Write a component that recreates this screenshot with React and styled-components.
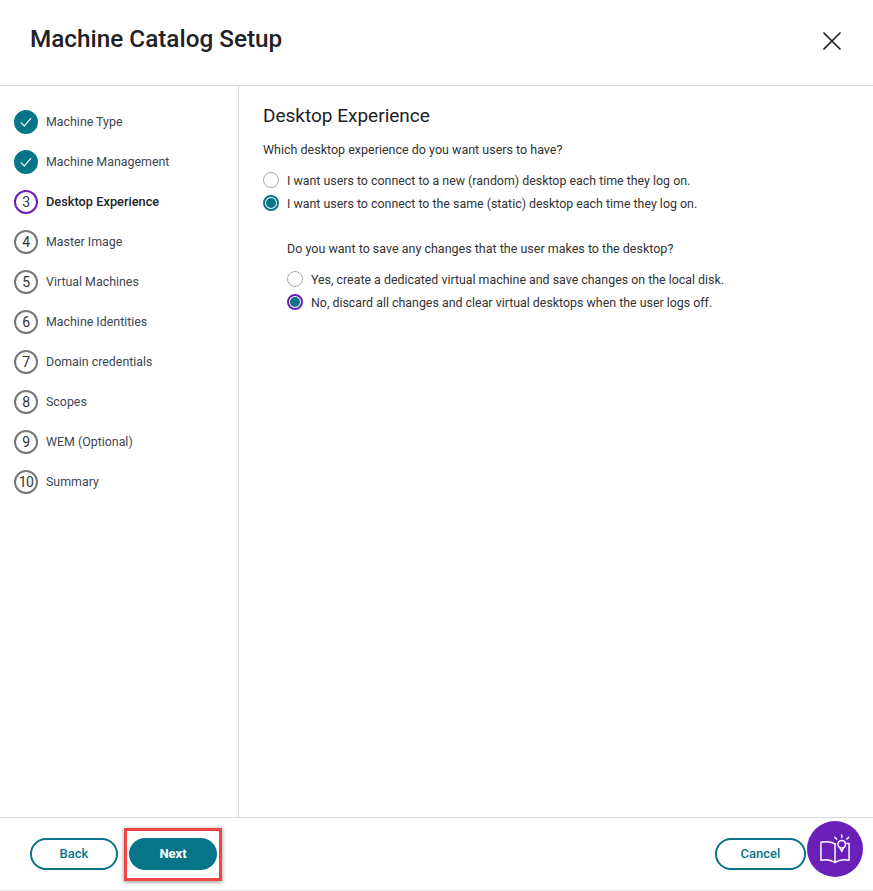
import React from 'react';
import styled, { createGlobalStyle } from 'styled-components';

const GlobalStyle = createGlobalStyle`
  html, body {
    margin: 0;
    padding: 0;
    background: #fff;
  }
  body {
    font-family: 'Roboto', 'Liberation Sans', sans-serif;
    color: #333;
  }
`;

const Dialog = styled.div`
  width: 873px;
  height: 891px;
  display: flex;
  flex-direction: column;
  background: #fff;
  overflow: hidden;
  box-sizing: border-box;
  border-bottom: 1px solid #e6e6e6;
`;

const Header = styled.header`
  height: 85px;
  flex: none;
  box-sizing: border-box;
  display: flex;
  align-items: flex-start;
  justify-content: space-between;
  padding: 24px 30px 0 30px;
`;

const Title = styled.h1`
  margin: 0;
  font-size: 24.3px;
  line-height: 30px;
  font-weight: 500;
  color: #1f2126;
`;

const CloseButton = styled.button`
  border: 0;
  padding: 0;
  margin-top: 6px;
  background: none;
  display: flex;
  width: 20px;
  height: 20px;
`;

const Body = styled.div`
  flex: 1;
  display: flex;
  min-height: 0;
  border-top: 1px solid #d9d9d9;
  border-bottom: 1px solid #d9d9d9;
`;

const Sidebar = styled.nav`
  width: 239px;
  flex: none;
  box-sizing: border-box;
  border-right: 1px solid #d9d9d9;
  padding: 24px 0 0 14px;
  display: flex;
  flex-direction: column;
  gap: 16px;
`;

const Step = styled.div`
  display: flex;
  align-items: center;
  gap: 8px;
  height: 24px;
`;

const StepMark = styled.span`
  width: 24px;
  height: 24px;
  box-sizing: border-box;
  border-radius: 50%;
  display: flex;
  align-items: center;
  justify-content: center;
  font-size: 14px;
  letter-spacing: -0.5px;
  padding-bottom: 1px;
  color: #333;
  background: ${p => (p.$state === 'done' ? '#067587' : '#fff')};
  border: 2px solid
    ${p => (p.$state === 'done' ? '#067587' : p.$state === 'active' ? '#6a1fb8' : '#767676')};
`;

const StepLabel = styled.span`
  font-size: ${p => (p.$active ? '12.8px' : '12.4px')};
  line-height: 18px;
  color: ${p => (p.$active ? '#1f2126' : '#3d4653')};
  font-weight: ${p => (p.$active ? 500 : 400)};
`;

const Content = styled.main`
  flex: 1;
  padding: 17px 0 0 24px;
`;

const Heading = styled.h2`
  margin: 0 0 12px;
  font-size: 19px;
  line-height: 26px;
  font-weight: 400;
  color: #222;
`;

const Question = styled.p`
  margin: 0 0 ${p => p.$gap}px;
  font-size: 12.5px;
  line-height: 18px;
  color: #333;
`;

const RadioGroup = styled.div`
  display: flex;
  flex-direction: column;
  gap: 5px;
`;

const RadioRow = styled.label`
  display: flex;
  align-items: center;
  gap: 8px;
  height: 18px;
  font-size: 12.4px;
  color: #333;
`;

const RadioDot = styled.span`
  width: 16px;
  height: 16px;
  box-sizing: border-box;
  border-radius: 50%;
  background: #fff;
  display: flex;
  align-items: center;
  justify-content: center;
  flex: none;
  border: ${p => (p.$ring ? `2px solid ${p.$ring}` : '1px solid #a8a8a8')};

  &::after {
    content: '';
    display: ${p => (p.$ring ? 'block' : 'none')};
    width: 10px;
    height: 10px;
    border-radius: 50%;
    background: #067587;
  }
`;

const SubSection = styled.div`
  margin: 28px 0 0 24px;
`;

const Footer = styled.footer`
  height: 72px;
  flex: none;
  box-sizing: border-box;
  display: flex;
  align-items: flex-start;
  justify-content: space-between;
  padding: 20px 67px 0 30px;
`;

const ButtonRow = styled.div`
  display: flex;
  gap: 11px;
`;

const PillButton = styled.button`
  width: ${p => p.$width}px;
  height: 32px;
  box-sizing: border-box;
  border-radius: 16px;
  border: 2px solid #067587;
  font-family: 'Roboto', sans-serif;
  font-size: 13px;
  padding: 0 0 2px;
  font-weight: ${p => (p.$primary ? 700 : 500)};
  color: ${p => (p.$primary ? '#fff' : '#067587')};
  background: ${p => (p.$primary ? '#067587' : '#fff')};
`;

const Highlight = styled.span`
  position: absolute;
  left: -5px;
  top: -10px;
  right: -5px;
  bottom: -11px;
  box-sizing: border-box;
  border: 3px solid #f04545;
  box-shadow: 0 1px 4px rgba(0, 0, 0, 0.45);
  pointer-events: none;
`;

const NextWrap = styled.div`
  position: relative;
  display: flex;
`;

const HelpBadge = styled.button`
  position: absolute;
  left: 807px;
  top: 821px;
  width: 56px;
  height: 56px;
  border: 0;
  padding: 0;
  border-radius: 50%;
  background: #6a1fb8;
  display: flex;
  align-items: center;
  justify-content: center;
`;

const Page = styled.div`
  position: relative;
  width: 873px;
  height: 891px;
`;

const steps = [
  { label: 'Machine Type', state: 'done' },
  { label: 'Machine Management', state: 'done' },
  { label: 'Desktop Experience', state: 'active' },
  { label: 'Master Image' },
  { label: 'Virtual Machines' },
  { label: 'Machine Identities' },
  { label: 'Domain credentials' },
  { label: 'Scopes' },
  { label: 'WEM (Optional)' },
  { label: 'Summary' },
];

const CheckIcon = () => (
  <svg width="12" height="12" viewBox="0 0 14 14" fill="none">
    <path d="M1 7.5 L5 11.5 L13 2.5" stroke="#fff" strokeWidth="1.3" />
  </svg>
);

const CloseIcon = () => (
  <svg width="20" height="20" viewBox="0 0 20 20" fill="none">
    <path d="M0.5 2.5 L17.5 19.5 M17.5 2.5 L0.5 19.5" stroke="#1f2126" strokeWidth="1.6" />
  </svg>
);

const BookIcon = () => (
  <svg width="36" height="36" viewBox="0 0 32 32" fill="none" stroke="#fff" strokeWidth="1.3" strokeLinejoin="round" strokeLinecap="round">
    <path d="M16 11.5 C12.5 9.5 8 9 3.5 10 V26 C8 25 12.5 25.5 16 28 C19.5 25.5 24 25 28.5 26 V11 H26.5" />
    <path d="M16 11.5 V28" />
    <circle cx="22" cy="11.8" r="3.4" />
    <path d="M20.3 14.6 L22 18.2 L23.7 14.6" />
    <path d="M22 3.5 V5.7 M15.8 5.5 L17.4 7.2 M28.2 5.5 L26.6 7.2" />
  </svg>
);

export default function App() {
  return (
    <Page>
      <GlobalStyle />
      <Dialog>
        <Header>
          <Title>Machine Catalog Setup</Title>
          <CloseButton aria-label="Close">
            <CloseIcon />
          </CloseButton>
        </Header>
        <Body>
          <Sidebar>
            {steps.map((step, i) => (
              <Step key={step.label}>
                <StepMark $state={step.state}>
                  {step.state === 'done' ? <CheckIcon /> : i + 1}
                </StepMark>
                <StepLabel $active={step.state === 'active'}>{step.label}</StepLabel>
              </Step>
            ))}
          </Sidebar>
          <Content>
            <Heading>Desktop Experience</Heading>
            <Question $gap={12}>Which desktop experience do you want users to have?</Question>
            <RadioGroup>
              <RadioRow>
                <RadioDot />
                I want users to connect to a new (random) desktop each time they log on.
              </RadioRow>
              <RadioRow>
                <RadioDot $ring="#067587" />
                I want users to connect to the same (static) desktop each time they log on.
              </RadioRow>
            </RadioGroup>
            <SubSection>
              <Question $gap={12}>Do you want to save any changes that the user makes to the desktop?</Question>
              <RadioGroup>
                <RadioRow>
                  <RadioDot />
                  Yes, create a dedicated virtual machine and save changes on the local disk.
                </RadioRow>
                <RadioRow>
                  <RadioDot $ring="#6a1fb8" />
                  No, discard all changes and clear virtual desktops when the user logs off.
                </RadioRow>
              </RadioGroup>
            </SubSection>
          </Content>
        </Body>
        <Footer>
          <ButtonRow>
            <PillButton $width={88}>Back</PillButton>
            <NextWrap>
              <PillButton $width={88} $primary>Next</PillButton>
              <Highlight />
            </NextWrap>
          </ButtonRow>
          <PillButton $width={91}>Cancel</PillButton>
        </Footer>
      </Dialog>
      <HelpBadge aria-label="Help">
        <BookIcon />
      </HelpBadge>
    </Page>
  );
}
